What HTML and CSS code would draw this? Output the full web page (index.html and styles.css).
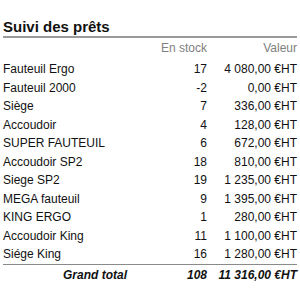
FILE: index.html
```html
<!DOCTYPE html>
<html lang="fr">
<head>
<meta charset="utf-8">
<link rel="stylesheet" href="styles.css">
</head>
<body>
<div class="panel">
  <h1 class="title">Suivi des prêts</h1>
  <div class="grid head">
    <span></span><span class="num">En stock</span><span class="num">Valeur</span>
  </div>
  <div class="rows">
    <div class="grid row"><span>Fauteuil Ergo</span><span class="num">17</span><span class="num">4 080,00 €HT</span></div>
    <div class="grid row"><span>Fauteuil 2000</span><span class="num">-2</span><span class="num">0,00 €HT</span></div>
    <div class="grid row"><span>Siège</span><span class="num">7</span><span class="num">336,00 €HT</span></div>
    <div class="grid row"><span>Accoudoir</span><span class="num">4</span><span class="num">128,00 €HT</span></div>
    <div class="grid row"><span>SUPER FAUTEUIL</span><span class="num">6</span><span class="num">672,00 €HT</span></div>
    <div class="grid row"><span>Accoudoir SP2</span><span class="num">18</span><span class="num">810,00 €HT</span></div>
    <div class="grid row"><span>Siege SP2</span><span class="num">19</span><span class="num">1 235,00 €HT</span></div>
    <div class="grid row"><span>MEGA fauteuil</span><span class="num">9</span><span class="num">1 395,00 €HT</span></div>
    <div class="grid row"><span>KING ERGO</span><span class="num">1</span><span class="num">280,00 €HT</span></div>
    <div class="grid row"><span>Accoudoir King</span><span class="num">11</span><span class="num">1 100,00 €HT</span></div>
    <div class="grid row"><span>Siége King</span><span class="num">16</span><span class="num">1 280,00 €HT</span></div>
  </div>
  <div class="grid total">
    <span class="num label">Grand total</span><span class="num">108</span><span class="num">11 316,00 €HT</span>
  </div>
</div>
</body>
</html>
```
FILE: styles.css
```css
html, body {
  margin: 0;
  padding: 0;
  background: #fff;
}
.panel {
  padding: 0 3px;
  font-family: "Liberation Sans", Arial, sans-serif;
  font-size: 12px;
  color: #111;
}
.title {
  margin: 0;
  padding-top: 18px;
  font-size: 15px;
  line-height: 18px;
  font-weight: bold;
  color: #111;
  border-bottom: 2px solid #9a9a9a;
}
.grid {
  display: grid;
  grid-template-columns: 1fr 77px 90px;
  line-height: 18px;
  white-space: nowrap;
}
.num {
  text-align: right;
}
.head {
  margin-top: 1px;
  color: #808080;
}
.rows {
  margin-top: 3px;
  border-bottom: 1px solid #8a8a8a;
}
.row {
  line-height: 18.5px;
}
.total {
  padding-top: 1px;
  font-weight: bold;
  font-style: italic;
}
.total .label {
  padding-right: 3px;
}
```
